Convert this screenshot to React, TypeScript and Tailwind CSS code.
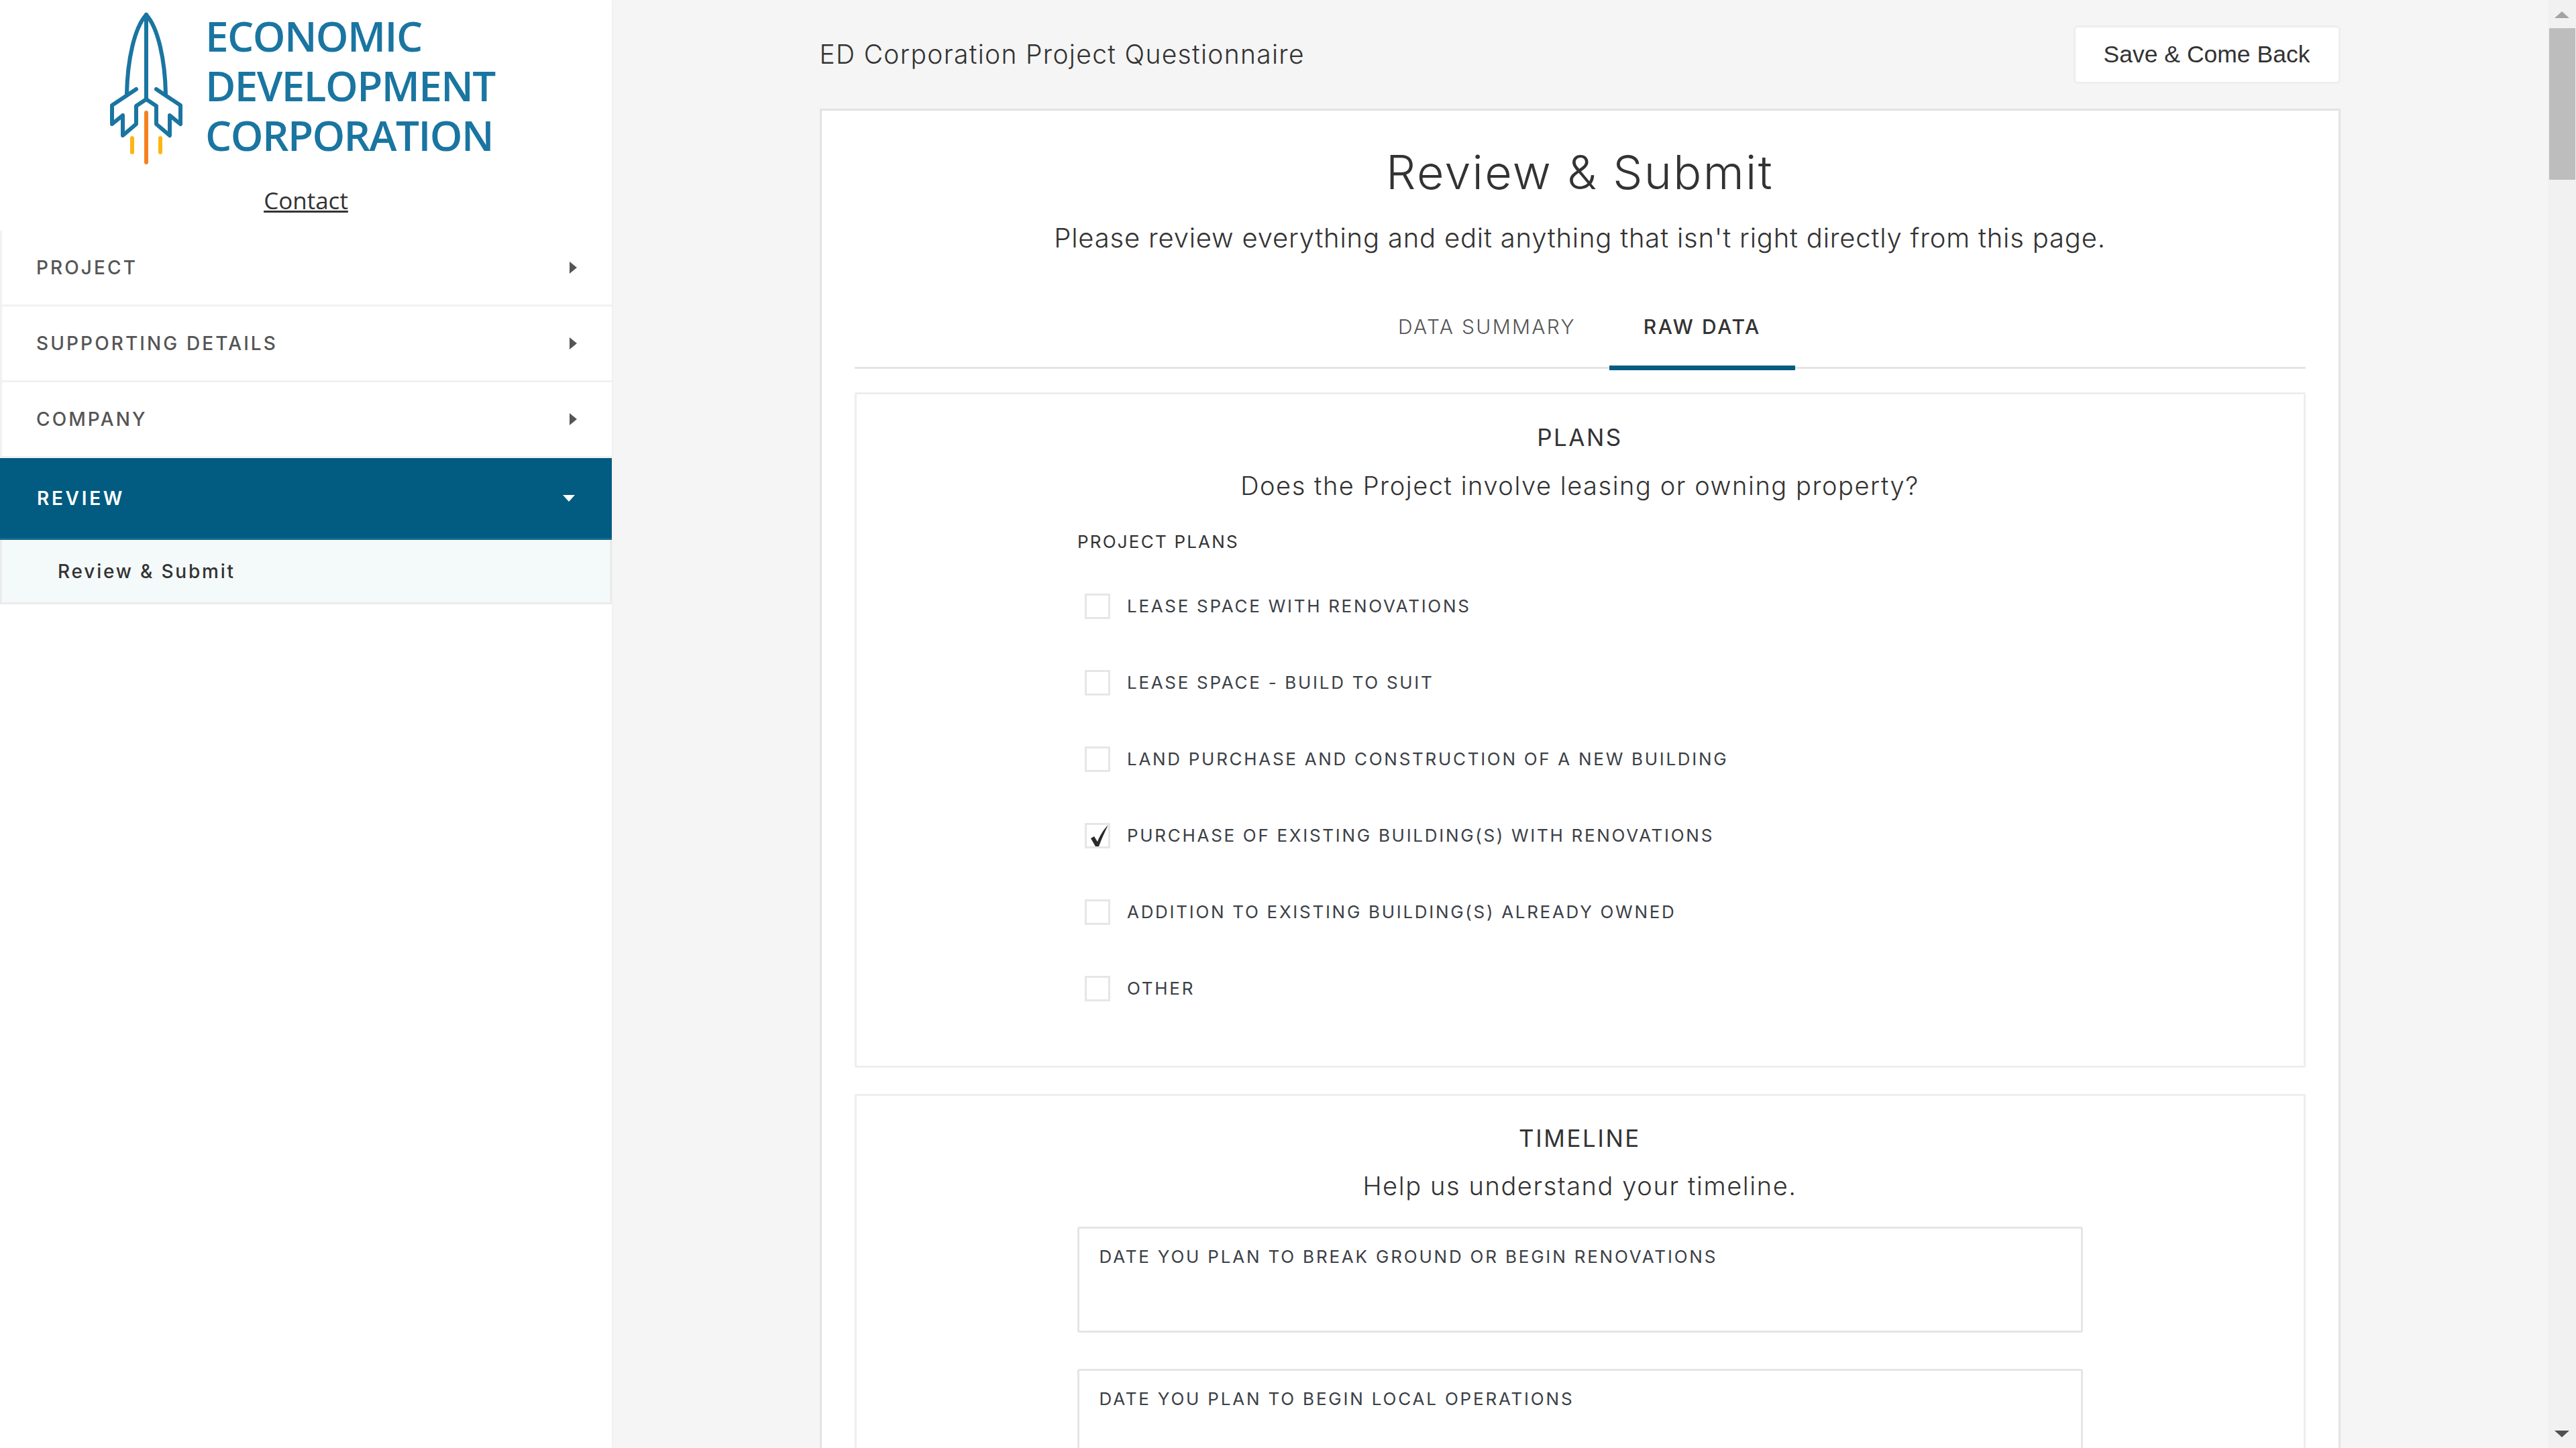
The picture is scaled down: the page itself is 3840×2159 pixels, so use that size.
const navItems = ["PROJECT", "SUPPORTING DETAILS", "COMPANY"];

const planOptions = [
  { label: "LEASE SPACE WITH RENOVATIONS", checked: false },
  { label: "LEASE SPACE - BUILD TO SUIT", checked: false },
  { label: "LAND PURCHASE AND CONSTRUCTION OF A NEW BUILDING", checked: false },
  { label: "PURCHASE OF EXISTING BUILDING(S) WITH RENOVATIONS", checked: true },
  { label: "ADDITION TO EXISTING BUILDING(S) ALREADY OWNED", checked: false },
  { label: "OTHER", checked: false },
];

const dateFields = [
  "DATE YOU PLAN TO BREAK GROUND OR BEGIN RENOVATIONS",
  "DATE YOU PLAN TO BEGIN LOCAL OPERATIONS",
];

const RocketLogo = () => (
  <svg className="mt-[18px] shrink-0" width="116" height="232" viewBox="160 18 116 232" fill="none">
    <g stroke="#1a75a1" strokeWidth="6" strokeLinecap="round" strokeLinejoin="round">
      <path d="M218 22 C200 42 190 90 189 140" />
      <path d="M218 22 C236 42 246 90 247 140" />
      <path d="M218 22 V148" />
      <path d="M203 133 L167 157 V185 L183 172 V202 L203 185 V158 L218 148 L233 158 V185 L253 202 V172 L269 185 V157 L233 133" />
    </g>
    <path d="M218 168 V242" stroke="#f5821f" strokeWidth="6" strokeLinecap="round" />
    <path d="M197 206 V227 M239 206 V227" stroke="#fdb515" strokeWidth="6" strokeLinecap="round" />
  </svg>
);

const Sidebar = () => (
  <aside className="w-[912px] shrink-0 bg-white font-['Inter',sans-serif] shadow-[2px_0_2px_rgba(0,0,0,0.02)]">
    <div className="h-[344px] flex flex-col items-center">
      <div className="flex w-full pl-[160px] h-[275px]">
        <RocketLogo />
        <div className="ml-[30px] pt-[16px] font-['Open_Sans',sans-serif] font-semibold text-[62px] leading-[74px] text-[#1a75a1] tracking-[-1.6px]">
          <div>ECONOMIC</div>
          <div>DEVELOPMENT</div>
          <div>CORPORATION</div>
        </div>
      </div>
      <a className="font-['Open_Sans',sans-serif] text-[35px] leading-[48px] text-[#333] underline">Contact</a>
    </div>
    {navItems.map((item) => (
      <div
        key={item}
        className="h-[113px] border-b-[3px] border-l-[3px] border-[#f1f1f1] flex items-center justify-between pl-[51px] pr-[52px] text-[28px] font-medium tracking-[3.1px] text-[#555]"
      >
        <span>{item}</span>
        <span className="w-0 h-0 border-y-[9px] border-y-transparent border-l-[11px] border-l-[#555]" />
      </div>
    ))}
    <div className="h-[122px] bg-[#025b80] border-b-[3px] border-[#126b8c] flex items-center justify-between pl-[55px] pr-[55px] text-[28px] font-semibold tracking-[3.7px] text-white">
      <span>REVIEW</span>
      <span className="w-0 h-0 border-x-[9px] border-x-transparent border-t-[10px] border-t-white" />
    </div>
    <div className="h-[96px] bg-[#f4f9f9] border-b-[3px] border-l-[3px] border-r-[3px] border-[#ebebeb] flex items-center pl-[83px] text-[28px] font-medium tracking-[2.8px] text-[#333]">
      Review &amp; Submit
    </div>
  </aside>
);

const PlanRow = ({ label, checked }: { label: string; checked: boolean }) => (
  <div className="h-[114px] flex items-center pl-[11px]">
    <div className="relative w-[38px] h-[38px] border-[3px] border-[#e6e6e6] bg-white">
      {checked && (
        <svg className="absolute left-[4px] top-[-1px]" width="30" height="36" viewBox="0 0 30 36" fill="none">
          <path d="M2 21 L7 18 L12 26 C16 16 21 8 28 1 C23 11 18 22 14 33 L9 33 Z" fill="#2b2b2b" />
        </svg>
      )}
    </div>
    <span className="ml-[25px] text-[26px] leading-[32px] tracking-[2.7px] text-[#3b4046]">{label}</span>
  </div>
);

const Scrollbar = () => (
  <div className="w-[42px] shrink-0 bg-[#f1f1f1] flex flex-col items-center h-full">
    <span className="mt-[17px] w-0 h-0 border-x-[11px] border-x-transparent border-b-[10px] border-b-[#a3a3a3]" />
    <div className="mt-[15px] w-[39px] h-[226px] bg-[#bdbdbd]" />
    <span className="mt-auto mb-[16px] w-0 h-0 border-x-[11px] border-x-transparent border-t-[10px] border-t-[#505050]" />
  </div>
);

export default function App() {
  return (
    <div className="flex w-[3840px] h-[2159px] overflow-hidden bg-[#f5f5f5] font-['Inter',sans-serif]">
      <Sidebar />
      <main className="flex-1 overflow-hidden">
        <div className="mx-auto w-[2267px]">
          <div className="flex items-center justify-between pt-[38px] mb-[37px]">
            <h1 className="text-[39px] font-light tracking-[1.3px] text-[#333]">ED Corporation Project Questionnaire</h1>
            <button className="w-[398px] h-[87px] rounded-[6px] border-[3px] border-[#eeeeee] bg-white font-['Liberation_Sans',sans-serif] text-[35.5px] text-[#333]">
              Save &amp; Come Back
            </button>
          </div>

          <section className="border-[3px] border-[#e3e3e3] bg-white px-[49px] pt-[50px]">
            <h2 className="text-center text-[70px] leading-[84px] font-light tracking-[2.3px] text-[#333]">Review &amp; Submit</h2>
            <p className="mt-[26px] text-center text-[40px] leading-[60px] font-light tracking-[0.8px] text-[#333]">
              Please review everything and edit anything that isn't right directly from this page.
            </p>

            <div className="mt-[39px] h-[126px] border-b-[3px] border-[#e5e5e5] flex justify-center text-[30px]">
              <div className="h-[128px] pt-[5px] pb-[7px] px-[50px] flex items-center font-light tracking-[2.3px] text-[#555]">DATA SUMMARY</div>
              <div className="h-[128px] pt-[5px] px-[51px] border-b-[7px] border-[#025b80] flex items-center font-medium tracking-[2.6px] text-[#333]">RAW DATA</div>
            </div>

            <div className="mt-[35px] h-[1007px] border-[3px] border-[#eeeeee] rounded-[2px] pt-[42px]">
              <h3 className="text-center text-[35px] leading-[44px] tracking-[2.5px] text-[#333]">PLANS</h3>
              <p className="mt-[22px] text-center text-[38px] leading-[56px] font-light tracking-[1.55px] text-[#333]">
                Does the Project involve leasing or owning property?
              </p>
              <div className="mx-auto w-[1498px] mt-[40px]">
                <div className="text-[26px] leading-[32px] tracking-[2.2px] text-[#333]">PROJECT PLANS</div>
                <div className="mt-[23px]">
                  {planOptions.map((option) => (
                    <PlanRow key={option.label} label={option.label} checked={option.checked} />
                  ))}
                </div>
              </div>
            </div>

            <div className="mt-[39px] border-[3px] border-[#eeeeee] rounded-[2px] pt-[41px]">
              <h3 className="text-center text-[35px] leading-[44px] tracking-[2.6px] text-[#333]">TIMELINE</h3>
              <p className="mt-[21px] text-center text-[38px] leading-[56px] font-light tracking-[1.6px] text-[#333]">
                Help us understand your timeline.
              </p>
              <div className="mx-auto w-[1499px] mt-[33px] flex flex-col gap-[54px]">
                {dateFields.map((label) => (
                  <div key={label} className="h-[158px] border-[3px] border-[#e5e5e5] rounded-[3px] pl-[30px] pt-[26px]">
                    <span className="block text-[26px] leading-[32px] tracking-[2.8px] text-[#3b4046]">{label}</span>
                  </div>
                ))}
              </div>
            </div>
          </section>
        </div>
      </main>
      <Scrollbar />
    </div>
  );
}
